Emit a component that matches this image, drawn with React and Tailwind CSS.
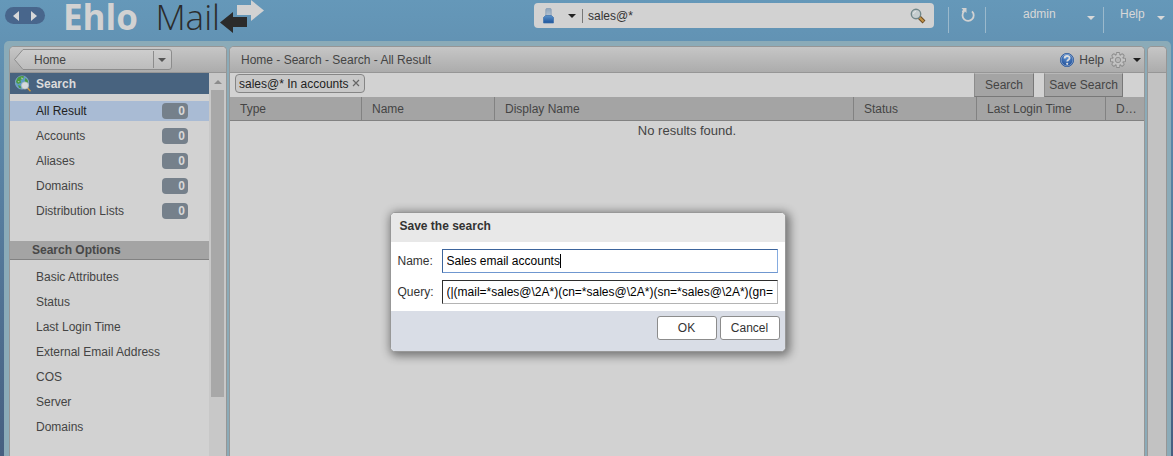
import { useState } from "react";

const results = ["All Result", "Accounts", "Aliases", "Domains", "Distribution Lists"];
const options = [
  "Basic Attributes",
  "Status",
  "Last Login Time",
  "External Email Address",
  "COS",
  "Server",
  "Domains",
];

function Caret({ className = "" }) {
  return (
    <svg viewBox="0 0 8 4" aria-hidden="true" className={`h-1 w-2 shrink-0 fill-current ${className}`}>
      <path d="M0 0h8L4 4z" />
    </svg>
  );
}

function LogoArrows() {
  return (
    <svg viewBox="0 0 44 33" aria-hidden="true" className="h-[33px] w-11 shrink-0">
      <path d="M17 5h14V0l13 10.500L31 21v-6H17z" fill="#d2d2d2" />
      <path d="M0 22.500L13 12v5h14v10H13v6z" fill="#2b2b2b" />
    </svg>
  );
}

function PersonIcon() {
  return (
    <svg viewBox="0 0 11 16" aria-hidden="true" className="h-4 w-[11px] shrink-0">
      <defs>
        <linearGradient id="head" x1="0" y1="0" x2="0" y2="1">
          <stop offset="0" stopColor="#8fa6bd" />
          <stop offset="1" stopColor="#b4c3d2" />
        </linearGradient>
        <linearGradient id="body" x1="0" y1="0" x2="0" y2="1">
          <stop offset="0" stopColor="#5c93c9" />
          <stop offset="1" stopColor="#1d549c" />
        </linearGradient>
      </defs>
      <rect x="2.800" y="0.500" width="5.400" height="7.500" rx="1" fill="url(#head)" stroke="#8199b3" strokeWidth="0.700" />
      <path d="M2.500 7.500h6L10.500 9.500V15H0.500V9.500z" fill="url(#body)" stroke="#3f72ad" strokeWidth="0.700" />
    </svg>
  );
}

function MagnifierIcon() {
  return (
    <svg viewBox="0 0 16 16" aria-hidden="true" className="size-4">
      <path d="M9 9l5 5" stroke="#6b4a22" strokeWidth="4" />
      <path d="M9.500 9.500l4 4" stroke="#c39447" strokeWidth="2.200" />
      <circle cx="6" cy="6" r="4.700" fill="#c5cdcf" stroke="#71878a" strokeWidth="1.400" />
      <path d="M3.500 6A2.500 2.500 0 0 1 6 3.500" fill="none" stroke="#e2e6e6" />
    </svg>
  );
}

function GlobeIcon() {
  return (
    <svg viewBox="0 0 17 17" aria-hidden="true" className="size-[17px] shrink-0">
      <circle cx="7" cy="7.500" r="6.600" fill="#5f9cc4" stroke="#8db3cc" strokeWidth="0.800" />
      <path d="M2 4c2-3 5-3.500 7-2.500L8 4 5.500 5 6 7.500 3 9 1 7z" fill="#4b9a3f" />
      <path d="M10.500 3l2 2 .7 3-2 .5-1.500-2.500zM3 10l2.500 1 .5 2.500-2-.8z" fill="#4b9a3f" />
      <path d="M6 2.500l2 .5-1 1.500zM2.500 6l2 .500-.5 1z" fill="#cbd9d6" />
      <path d="M12.500 13l3 3.200" stroke="#d29a3c" strokeWidth="1.400" />
      <circle cx="10" cy="10.500" r="3.600" fill="#d6dadb" stroke="#b2bbc0" strokeWidth="0.700" />
    </svg>
  );
}

function HelpIcon() {
  return (
    <svg viewBox="0 0 16 16" aria-hidden="true" className="size-4 shrink-0">
      <defs>
        <radialGradient id="helpFill" cx="0.500" cy="0.300" r="0.700">
          <stop offset="0" stopColor="#5c91d2" />
          <stop offset="1" stopColor="#1f4b93" />
        </radialGradient>
      </defs>
      <circle cx="8" cy="8" r="6.600" fill="url(#helpFill)" stroke="#315c9c" />
      <circle cx="8" cy="8" r="5.900" fill="none" stroke="#93afd4" strokeWidth="0.700" />
      <path d="M5.600 6.400c0-3.200 5-3.100 5-.3 0 1.700-2.400 1.700-2.400 3.500" fill="none" stroke="#dedede" strokeWidth="1.800" />
      <circle cx="8.200" cy="11.800" r="1.100" fill="#dedede" />
    </svg>
  );
}

const teeth = [0, 45, 90, 135];

function GearIcon() {
  return (
    <svg viewBox="0 0 16 16" aria-hidden="true" className="size-4 shrink-0">
      <g fill="#c2c2c2" stroke="#8c8c8c" strokeWidth="1.300" strokeLinejoin="round">
        {teeth.map((angle) => (
          <rect key={angle} x="6.500" y="0.600" width="3" height="14.800" rx="0.800" transform={`rotate(${angle} 8 8)`} />
        ))}
        <circle cx="8" cy="8" r="5.600" />
      </g>
      <g fill="#c2c2c2">
        {teeth.map((angle) => (
          <rect key={angle} x="6.700" y="1" width="2.600" height="14" transform={`rotate(${angle} 8 8)`} />
        ))}
      </g>
      <circle cx="8" cy="8" r="2.700" fill="#b6b6b6" stroke="#8c8c8c" strokeWidth="0.900" />
    </svg>
  );
}

function Header() {
  return (
    <header className="flex h-[41px] shrink-0 items-start text-[#d8d8d8]">
      <div className="flex w-[534px] shrink-0 items-start pl-[5px]">
        <div className="mt-[7px] flex h-[17px] w-10 shrink-0 items-center justify-between rounded-full bg-[#48668c] px-2">
          <button type="button" aria-label="Back">
            <svg viewBox="0 0 6 10" className="h-2.5 w-1.5 fill-[#d8d8d8]"><path d="M6 0v10L0 5z" /></svg>
          </button>
          <button type="button" aria-label="Forward">
            <svg viewBox="0 0 6 10" className="h-2.5 w-1.5 fill-[#d8d8d8]"><path d="M0 0v10l6-5z" /></svg>
          </button>
        </div>
        <div className="ml-[18px] flex items-start">
          <div className="flex w-[157px] items-baseline justify-between font-['Open_Sans',sans-serif] text-[35px] leading-[34px]">
            <span className="font-bold text-[#d2d2d2]">Ehlo</span>
            <span className="font-light text-[#2b2b2b]">Mail</span>
          </div>
          <LogoArrows />
        </div>
      </div>
      <div className="mt-[3px] flex h-[25px] min-w-0 flex-1 items-center rounded-[4px] bg-[#d2d2d2] pr-2 pl-[9px] text-[#333]">
        <button type="button" aria-label="Search type" className="flex items-center gap-[14px]">
          <PersonIcon />
          <Caret className="text-[#222]" />
        </button>
        <span className="ml-1.5 h-3.5 w-px bg-[#777]" />
        <input
          aria-label="Search"
          defaultValue="sales@*"
          className="min-w-0 flex-1 bg-transparent pl-[5px] text-xs outline-none"
        />
        <button type="button" aria-label="Run search"><MagnifierIcon /></button>
      </div>
      <div className="ml-[14px] flex w-[225px] shrink-0 pt-[7px] text-xs">
        <button type="button" aria-label="Refresh" className="flex h-[26px] w-[37px] justify-center border-l border-[#9bb9cc] pl-0.5">
          <svg viewBox="0 0 16 16" className="size-4" fill="none" stroke="#d2d2d2" strokeWidth="1.800">
            <path d="M4 4.500A5.600 5.600 0 1 0 12 4.300" />
            <path d="M1.500 1h5v5L5 4.500 3 6 1.800 4.500 3 2.800z" fill="#d2d2d2" stroke="none" />
          </svg>
        </button>
        <button type="button" className="flex h-[26px] w-[118px] border-l border-[#9bb9cc] pr-2 pl-[37px]">
          <span className="flex-1 text-left leading-[14px]">admin</span>
          <Caret className="mt-[9px]" />
        </button>
        <button type="button" className="flex h-[26px] flex-1 border-l border-[#9bb9cc] pr-2 pl-4">
          <span className="flex-1 text-left leading-[14px]">Help</span>
          <Caret className="mt-[9px]" />
        </button>
      </div>
    </header>
  );
}

function Sidebar() {
  return (
    <aside className="flex w-[218px] shrink-0 flex-col overflow-hidden rounded-t-[5px] border-x border-t border-[#969696] bg-[#d2d2d2]">
      <div className="flex h-[26px] shrink-0 items-center border-b border-[#969696] bg-linear-to-b from-[#c6c6c6] to-[#acacac] pl-1">
        <div className="relative flex h-[21px] w-[158px] items-center">
          <svg viewBox="0 0 158 21" aria-hidden="true" className="absolute inset-0 size-full">
            <defs>
              <linearGradient id="crumb" x1="0" y1="0" x2="0" y2="1">
                <stop offset="0" stopColor="#cecece" />
                <stop offset="1" stopColor="#bcbcbc" />
              </linearGradient>
            </defs>
            <path d="M9 .5h146q2.500 0 2.500 2.500v15q0 2.500-2.500 2.500H9L.5 10.500z" fill="url(#crumb)" stroke="#8c8c8c" />
            <path d="M139.500 2v17" stroke="#8c8c8c" />
          </svg>
          <button type="button" className="relative flex-1 pl-5 text-left">Home</button>
          <button type="button" aria-label="Open history" className="relative flex w-5 justify-center">
            <Caret className="text-[#555]" />
          </button>
        </div>
      </div>
      <div className="flex min-h-0 flex-1">
        <nav className="min-w-0 flex-1">
          <h2 className="flex h-[21px] items-center gap-1 bg-[#48637f] pl-[5px] font-normal text-[#dcdcdc]">
            <GlobeIcon />
            <span className="font-bold">Search</span>
          </h2>
          <ul className="flex flex-col gap-[5px] pt-[7px]">
            {results.map((label, i) => (
              <li key={label}>
                <a
                  href="#results"
                  className={`flex h-5 items-center justify-between pr-[21px] pl-[26px] ${i === 0 ? "bg-[#a9bbd4] text-[#222]" : ""}`}
                >
                  {label}
                  <span className="h-4 w-[26px] rounded-[4px] bg-[#75808b] pr-[3px] text-right leading-4 font-bold text-[#d8d8d8]">
                    0
                  </span>
                </a>
              </li>
            ))}
          </ul>
          <h2 className="mt-5 h-[19px] border-b border-[#828282] bg-[#a4a4a4] pl-[22px] leading-[18px] font-bold text-[#484848]">
            Search Options
          </h2>
          <ul className="flex flex-col gap-[5px] pt-[7px]">
            {options.map((label) => (
              <li key={label}>
                <a href="#options" className="block h-5 pl-[26px] leading-5">{label}</a>
              </li>
            ))}
          </ul>
        </nav>
        <div aria-hidden="true" className="flex w-[17px] flex-col items-center bg-[#c8c8c8]">
          <div className="flex h-[17px] items-center text-[#8c8c8c]">
            <Caret className="rotate-180" />
          </div>
          <div className="h-[307px] w-[13px] bg-[#a8a8a8]" />
        </div>
      </div>
    </aside>
  );
}

function Results() {
  const button =
    "h-6 border border-t-[#b8b8b8] border-r-[#787878] border-b-[#787878] border-l-[#8c8c8c] bg-[#a4a4a4]";
  const cell = "h-6 truncate border-b border-[#828282] pl-2.5 text-left font-normal";
  return (
    <main className="min-w-0 flex-1 overflow-hidden rounded-t-[5px] border-x border-t border-[#969696] bg-[#d2d2d2]">
      <div className="flex h-[26px] items-center border-b border-[#969696] bg-linear-to-b from-[#c6c6c6] to-[#acacac] pr-[3px] pl-[11px]">
        <span className="flex-1">Home - Search - Search - All Result</span>
        <button type="button" className="flex items-center gap-1">
          <HelpIcon />
          Help
        </button>
        <button type="button" aria-label="Settings" className="ml-1.5 flex items-center gap-[7px]">
          <GearIcon />
          <Caret className="text-[#1e1e1e]" />
        </button>
      </div>
      <div className="flex h-6 items-start pr-[21px] pl-[5px]">
        <div className="mt-px flex h-[19px] items-center gap-[3px] rounded-[4px] border border-[#858585] bg-[#c8c8c8] pr-1 pl-[3px] text-[#222]">
          sales@* In accounts
          <button type="button" aria-label="Remove filter">
            <svg viewBox="0 0 8 8" className="mb-0.5 size-2" stroke="#666" strokeWidth="1.200">
              <path d="M1 1l6 6M7 1L1 7" />
            </svg>
          </button>
        </div>
        <div className="ml-auto flex gap-2.5">
          <button type="button" className={`w-[60px] ${button}`}>Search</button>
          <button type="button" className={`w-[79px] whitespace-nowrap ${button}`}>Save Search</button>
        </div>
      </div>
      <table className="w-full table-fixed border-separate border-spacing-0">
        <thead className="bg-[#a4a4a4]">
          <tr>
            <th className={`w-[132px] border-r ${cell}`}>Type</th>
            <th className={`w-[133px] border-r ${cell}`}>Name</th>
            <th className={`border-r ${cell}`}>Display Name</th>
            <th className={`w-[123px] border-r ${cell}`}>Status</th>
            <th className={`w-[129px] border-r ${cell}`}>Last Login Time</th>
            <th className={`w-[38px] ${cell}`}>D…</th>
          </tr>
        </thead>
        <tbody>
          <tr>
            <td colSpan={6} className="h-5 text-center text-[13px] leading-4">No results found.</td>
          </tr>
        </tbody>
      </table>
    </main>
  );
}

function SaveDialog() {
  const [name, setName] = useState("Sales email accounts");
  const button = "h-6 w-[60px] rounded-[3px] border border-[#8c8c8c] bg-white text-[#333]";
  return (
    <div className="absolute inset-0 flex items-start justify-center pt-[212px] pl-0.5">
      <form
        role="dialog"
        aria-labelledby="dialog-title"
        className="w-[396px] overflow-hidden rounded-[5px] border border-[#989898] bg-white text-[#333] shadow-[2px_2px_10px_2px_rgba(0,0,0,0.45)]"
      >
        <h1 id="dialog-title" className="h-[29px] bg-[#e8e8e8] pl-[9px] leading-[26px] font-bold">
          Save the search
        </h1>
        <div className="flex flex-col gap-[7px] p-[7px]">
          <div className="flex items-center">
            <label htmlFor="name" className="w-11">Name:</label>
            <div className="relative min-w-0 flex-1">
              <input
                id="name"
                value={name}
                onChange={(e) => setName(e.target.value)}
                className="h-6 w-full border border-t-[#3d659c] border-r-[#86ace0] border-b-[#6f97d0] border-l-[#3d659c] px-1 text-black outline-none"
              />
              <span aria-hidden="true" className="pointer-events-none absolute inset-y-0 left-[5px] flex items-center">
                <span className="invisible whitespace-pre">{name}</span>
                <span className="h-3.5 w-px bg-black" />
              </span>
            </div>
          </div>
          <div className="flex items-center">
            <label htmlFor="query" className="w-11">Query:</label>
            <input
              id="query"
              defaultValue="(|(mail=*sales@\2A*)(cn=*sales@\2A*)(sn=*sales@\2A*)(gn=*sales@\2A*))"
              className="h-6 min-w-0 flex-1 border border-t-[#2e2e2e] border-r-[#b4b4b4] border-b-[#b4b4b4] border-l-[#2e2e2e] px-1 text-black outline-none"
            />
          </div>
        </div>
        <div className="flex h-10 justify-end gap-[3px] bg-[#d9dde6] pt-[5px] pr-[5px]">
          <button type="button" className={button}>OK</button>
          <button type="button" className={button}>Cancel</button>
        </div>
      </form>
    </div>
  );
}

export default function App() {
  return (
    <div className="relative flex h-screen flex-col overflow-hidden bg-linear-to-b from-[#6598b9] to-[#465f80] font-['Liberation_Sans',Arial,sans-serif] text-xs text-[#444]">
      <Header />
      <div className="mr-0.5 ml-1 flex min-h-0 flex-1 gap-0.5 rounded-t-[5px] bg-[#8babb8] pt-[5px] pr-1 pl-[5px]">
        <Sidebar />
        <Results />
        <aside className="w-5 shrink-0 overflow-hidden rounded-t-[5px] border-x border-t border-[#969696] bg-[#c2c2c2]">
          <div className="h-[26px] border-b border-[#969696] bg-linear-to-b from-[#c6c6c6] to-[#acacac]" />
        </aside>
      </div>
      <SaveDialog />
    </div>
  );
}
